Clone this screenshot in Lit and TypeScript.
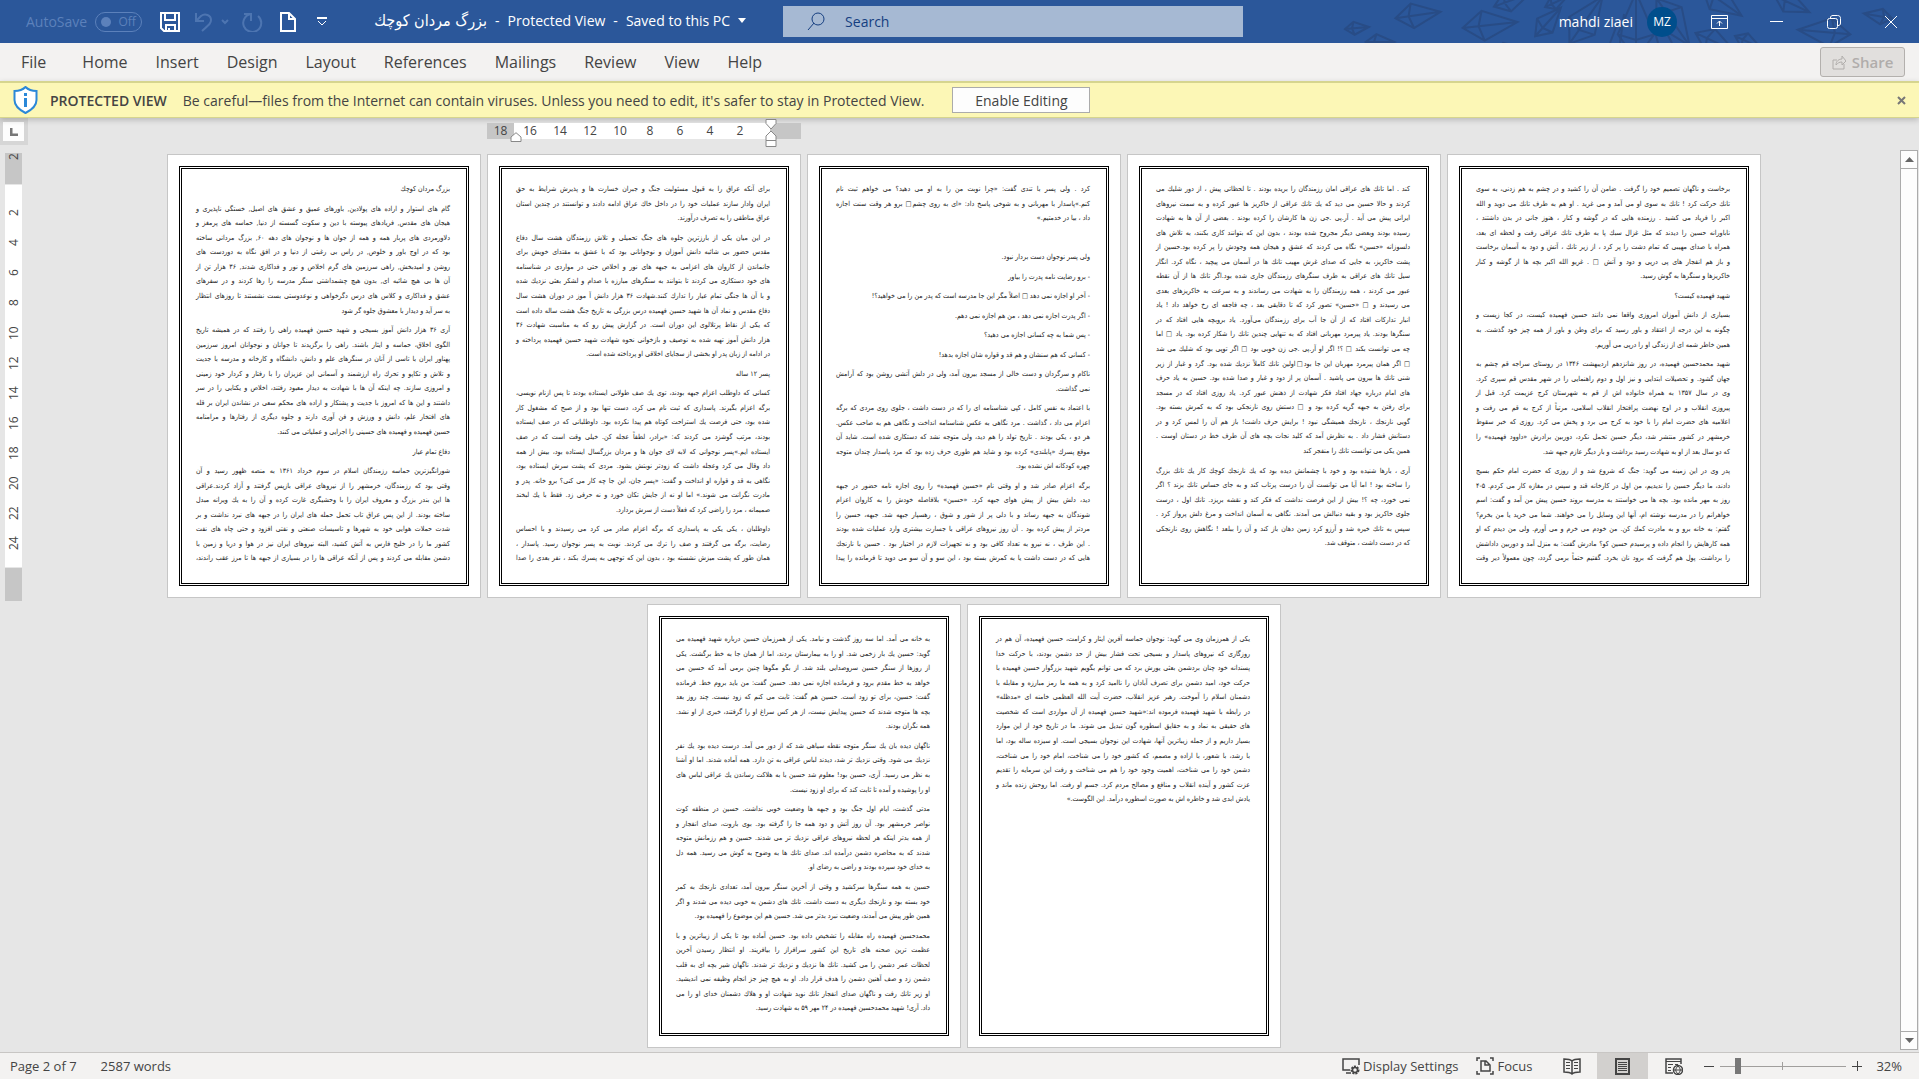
import { LitElement, html, css, svg, nothing } from "lit";
import { customElement, property } from "lit/decorators.js";
import { classMap } from "lit/directives/class-map.js";
import { styleMap } from "lit/directives/style-map.js";

interface PageData {
  paragraphs: string[];
  /** The last paragraph runs on to the next page. */
  continues?: boolean;
  /** Share of the page, in text rows, left empty at its foot. */
  blankRows?: number;
}

const PAGES: PageData[] = [
  {
    continues: true,
    paragraphs: [
      `بزرگ مردان کوچك`,
      `گام های استوار و اراده های پولادین, باورهای عمیق و عشق های اصیل, خستگی ناپذیری و
هیجان های مقدس, فریادهای پیوسته با دین و سکوت گسسته از دنیا, حماسه های پرمغز و
دلاورمردی های پربار همه و همه از جوان ها و نوجوان های دهه ۶۰, بزرگ مردانی ساخته
بود که در اوج باور و خلوص, در راس بی رغبتی از دنیا و در افق نگاه به دوردست های
روشن و امیدبخش, راهی سرزمین های گرم اخلاص و نور و فداکاری شدند, ۳۶ هزار تن از
آن ها بی هیچ شائبه ای, بدون هیچ چشمداشتی سنگر مدرسه را رها کردند و در سفرهای
عشق و فداکاری و کلاس های درس دگرخواهی و نوعدوستی بست نشستند تا روزهای انتظار
به سر آید و دیدار با معشوق جلوه گر شود`,
      `آری ۳۶ هزار دانش آموز بسیجی و شهید حسین فهمیده راهی را رفتند که در همیشه تاریخ
الگوی اخلاق، حماسه و ایثار باشند. راهی را برگزیدند تا جوانان و نوجوانان امروز سرزمین
پهناور ایران با تاسی از آنان در سنگرهای علم و دانش، دانشگاه و کارخانه و مدرسه با جدیت
و تلاش و تکاپو و تحرك راه ارزشمند و آسمانی این عزیزان را با رفتار و کردار خود زمینی
و امروزی سازند. چه اینکه آن ها با شهادت به دیدار معبود رفتند، اخلاص و یکتایی را در سر
داشتند و این ها که امروز با جدیت و پشتکار و اراده های محکم سعی در نشاندن ایران بر قله
های افتخار علم، دانش و ورزش و فن آوری دارند و جلوه دیگری از رفتارها و مرامنامه
حسین فهمیده و فهمیده های حسینی را اجرایی و عملیاتی می کنند.`,
      `دفاع تمام عیار`,
      `شورانگیزترین حماسه رزمندگان اسلام در سوم خرداد ۱۳۶۱ به منصه ظهور رسید و آن
وقتی بود که رزمندگان، خرمشهر را از نیروهای عراقی بازپس گرفتند و آزاد کردند.عراقی
ها این بندر بزرگ و معروف ایران را با وحشیگری غارت کرده و آن را به یك ویرانه مبدل
ساخته بودند. از این پس عراق تاب تحمل حمله های ایران را در جبهه های نبرد نداشت و بر
شدت حملات هوایی خود به شهرها و تاسیسات صنعتی و نفتی افزود و حتی چاه های نفت
کشور ما را در خلیج فارس به آتش کشید، البته نیروهای ایران نیز در هوا و دریا و زمین با
دشمن مقابله می کردند و پس از آنکه عراقی ها را در بسیاری از جبهه ها تا مرز عقب راندند،`,
    ],
  },
  {
    continues: true,
    paragraphs: [
      `برای آنکه عراق را به قبول مسئولیت جنگ و جبران خسارت ها و پذیرش شرایط به حق
ایران وادار سازند عملیات خود را در داخل خاك عراق ادامه دادند و توانستند در چندین استان
عراق مناطقی را به تصرف درآورند.`,
      `در این میان یکی از بارزترین جلوه های جنگ تحمیلی و تلاش رزمندگان هشت سال دفاع
مقدس حضور بی شائبه دانش آموزان و نوجوانانی بود که با عشق به مقتدای خویش برای
جانماندن از کاروان های اعزامی به جبهه های نور و اخلاص حتی در مواردی در شناسنامه
های خود دستکاری می کردند تا بتوانند به سنگرهای مبارزه با صدام و لشکر بعثی نزدیك شده
و با آن ها جنگی تمام عیار را تدارك کنند.شهادت ۳۶ هزار دانش آ موز در دوران هشت سال
دفاع مقدس و نماد آن ها شهید حسین فهمیده درس بزرگی به تاریخ جنگ هشت ساله داده است
که یکی از نقاط پرتلالوی این دوران است. در گزارش پیش رو که به مناسبت شهادت ۳۶
هزار دانش آموز تهیه شده به توصیف و بازخوانی نحوه شهادت شهید حسین فهمیده پرداخته و
در ادامه از زبان پدر او بخشی از سجایای اخلاقی او پرداخته شده است.`,
      `پسر ۱۲ ساله`,
      `کسانی که داوطلب اعزام جبهه بودند، توی یك صف طولانی ایستاده بودند تا پس ازنام نویسی،
برگه اعزام بگیرند. پاسداری که ثبت نام می کرد، دست تنها بود و از صبح که مشغول کار
شده بود، حتی فرصت یك استراحت کوتاه هم پیدا نکرده بود. داوطلبانی که در صف ایستاده
بودند، مرتب گوشزد می کردند که: «برادر، لطفاً عجله کن. خیلی وقت است که در صف
ایستاده ایم.»پسر نوجوانی که لابه لای جوان ها و مردان بزرگسال ایستاده بود، بیش از همه
داد وقال می کرد وعجله داشت که زودتر نوبتش بشود. مردی که پشت سرش ایستاده بود،
نگاهی به قد و قواره او انداخت و گفت: «پسر جان، این جا چه کار می کنی؟ برو خانه. پدر و
مادرت نگرانت می شوند.» اما او نه از جایش تکان خورد و نه حرفی زد. فقط با یك لبخند
صمیمانه ، مرد را راضی کرد که فعلاً دست از سرش بردارد.`,
      `داوطلبان ، یکی یکی به پاسداری که برگه اعزام صادر می کرد می رسیدند و با احساس
رضایت، برگه می گرفتند و صف را ترك می کردند. نوبت به پسر نوجوان رسید. پاسدار ،
همان طور که پشت میزش نشسته بود ، بدون این که توجهی به پسرك بکند ، نفر بعدی را صدا`,
    ],
  },
  {
    continues: true,
    paragraphs: [
      `کرد . ولی پسر با تندی گفت: «چرا نوبت من را به او می دهید؟ می خواهم ثبت نام
کنم.»پاسدار با مهربانی و به شوخی پاسخ داد: «ای به روی چشم□ برو هر وقت سنت اجازه
داد ، بیا در خدمتیم.»`,
      ``,
      `ولی پسر نوجوان دست بردار نبود.`,
      `- برو رضایت نامه پدرت را بیاور`,
      `- آخر او اجازه نمی دهد □ اصلاً مگر این جا مدرسه است که پدر من را می خواهید؟!`,
      `- اگر پدرت اجازه نمی دهد ، من هم اجازه نمی دهم.`,
      `- پس شما به چه کسانی اجازه می دهید؟`,
      `- کسانی که هم سنشان و هم قد و قواره شان اجازه بدهد!`,
      `ناکام و سرگردان و دست خالی از مسجد بیرون آمد، ولی در دلش آتشی روشن بود که آرامش
نمی گذاشت.`,
      `با اعتماد به نفس کامل ، کپی شناسنامه ای را که در دست داشت ، جلوی روی مردی که برگه
اعزام می داد ، گذاشت . مرد نگاهی به عکس شناسنامه انداخت و نگاهی هم به صاحب عکس.
هر دو ، یکی بودند . تاریخ تولد را هم دید، ولی متوجه نشد که دستکاری شده است. شاید آن
موقع پسرك «پابلندی» کرده بود و شاید هم طوری حرف زده بود که مرد پاسدار چندان متوجه
چهره کودکانه اش نشده بود.`,
      `برگه اعزام صادر شد و او وقتی نام «حسین فهمیده» را روی اجازه نامه حضور در جبهه
دید، دلش بیش از پیش هوای جبهه کرد. «حسین» بلافاصله خودش را به کاروان اعزام
شوندگان به جبهه رساند و با دلی پر از شور و شوق ، رهسپار جبهه شد. جبهه، حسین را
مردتر از پیش کرده بود . آن روز نیروهای عراقی با جسارت بیشتری وارد عملیات شده بودند
. این طرف ، نه نیرو به تعداد کافی بود و نه تجهیزات لازم در اختیار بود . حسین با نارنجك
هایی که در دست داشت یا به کمرش بسته بود ، این سو و آن سو می دوید تا فرمانده را پیدا`,
    ],
  },
  {
    blankRows: 0.7,
    paragraphs: [
      `کند . اما تانك های عراقی امان رزمندگان را بریده بودند . تا لحظاتی پیش ، از دور شلیك می
کردند و حالا حسین می دید که یك تانك عراقی از خاکریز ها عبور کرده و به سمت نیروهای
ایرانی پیش می آید . آر.پی .جی زن ها کارشان را کرده بودند . بعضی از آن ها به شهادت
رسیده بودند وبعضی دیگر مجروح شده بودند ، بدون این که بتوانند کاری بکنند، به تلاش های
دلسوزانه «حسین» نگاه می کردند که عشق و هیجان همه وجودش را پر کرده بود.حسین از
پشت خاکریز، به جایی که صدای غرش مهیب تانك ها در آسمان می پیچید ، نگاه کرد. انگار
سیل تانك های عراقی به طرف سنگرهای رزمندگان جاری شده بود.اگر تانك ها از آن نقطه
عبور می کردند ، همه رزمندگان را به شهادت می رساندند و به سرعت به خاکریزهای بعدی
می رسیدند و □ «حسین» تصور کرد که تا دقایقی بعد ، چه فاجعه ای رخ خواهد داد ! یاد
انبار تدارکات افتاد که از آن جا آب برای رزمندگان می‌آورد. یاد بروبچه هایی افتاد که در
سنگرها بودند. یاد پیرمرد مهربانی افتاد که به تنهایی چندین تانك را شکار کرده بود. یاد □ اما
چه می توانست بکند □ ؟! اگر او آر.پی .جی زن خوبی بود □ اگر توپی بود که شلیك می شد
□ اگر همان پیرمرد مهربان این جا بود□اولین تانك کاملاً نزدیك شده بود. گرد و غبار از زیر
شنی تانك ها بیرون می پاشید . آسمان پر از دود و غبار و صدا شده بود. حسین به یاد حرف
های امام درباره جهاد افتاد فکر شهادت از ذهنش عبور کرد. یاد روزی افتاد که در مسجد
برای رفتن به جبهه گریه کرده بود و □ دستش روی نارنجکی بود که به کمرش بسته بود.
گویی نارنجك ، نارنجك همیشگی نبود ! برایش حرف داشت! باز هم آن را لمس کرد و در
دستانش فشار داد . به نظرش آمد که کلید نجات بچه های آن طرف خط در دستان اوست .
همین یکی می توانست تانك را منفجر کند`,
      `آری ، بارها شنیده بود و خود با چشمانش دیده بود که یك نارنجك کوچك کار یك تانك بزرگ
را ساخته بود ! اما آیا می توانست آن را درست پرتاب کند و به جای حساس تانك بزند ؟ اگر
نمی خورد، چه ؟! بیش از این فرصت نداشت که فکر کند و نقشه بریزد. تانك اول ، درست
جلوی خاکریز بود و بقیه دنبالش می آمدند. نگاهی به آسمان انداخت و مرغ دلش پرواز کرد .
سپس به تانك خیره شد و آرزو کرد زمین دهان باز کند و آن را ببلعد ! نگاهش روی نارنجکی
که در دست داشت ، متوقف شد.`,
    ],
  },
  {
    continues: true,
    paragraphs: [
      `برخاست و ناگهان تصمیم خود را گرفت . ضامن آن را کشید و در چشم به هم زدنی، به سوی
تانك حرکت کرد ! تانك به سوی او می آمد و می غرید . او هم به طرف تانك می دوید و الله
اکبر را فریاد می کشید . رزمنده هایی که در گوشه و کنار ، هنوز جانی در بدن داشتند ،
ناباورانه حسین را دیدند که مثل غزال سبك پا به طرف تانك عراقی رفت و لحظه ای بعد،
همراه با صدای مهیبی که تمام دشت را پر کرد ، از زیر تانك ، آتش و دود به آسمان برخاست
و باز هم انفجار های پی درپی و دود و آتش □ . غریو الله اکبر بچه ها از گوشه و کنار
خاکریزها و سنگرها به گوش رسید.`,
      `شهید فهمیده کیست؟`,
      `بسیاری از دانش آموزان امروزی واقعا نمی دانند حسین فهمیده کیست، در کجا زیست و
چگونه به این درجه از اعتقاد و باور رسید که برای وطن و باور از همه چیز خود گذشت. به
همین خاطر شمه ای از زندگی او را درپی می آوریم.`,
      `شهید محمدحسین فهمیده، در روز شانزدهم اردیبهشت ۱۳۴۶ در روستای سراجه قم چشم به
جهان گشود. و تحصیلات ابتدایی و نیز اول و دوم راهنمایی را در شهر مقدس قم سپری کرد.
وی در سال ۱۳۵۷ به همراه خانواده اش از قم به شهرستان کرج عزیمت کرد. قبل از
پیروزی انقلاب و در اوج نهضت پرافتخار انقلاب اسلامی، مرتباً از کرج به قم می رفت و
اعلامیه های حضرت امام را با خود به کرج می برد و پخش می کرد. روزی که خبر سقوط
خرمشهر در کشور منتشر شد، دیگر حسین تحمل نکرد، دوربین برادرش «داوود فهمیده» را
که دو سال بعد از او به شهادت رسید برداشت و بار دیگر عازم جبهه شد.`,
      `پدر وی در این زمینه می گوید: جنگ که شروع شد و از روزی که حضرت امام حکم بسیج
دادند، ما دیگر حسین را ندیدیم، من اول در کارخانه قند و سپس در مغازه کار می کردم. ۵-۴
روز به مهر مانده بود. بچه ها می خواستند به مدرسه بروند حسین پیش من آمد و گفت: اسم
خواهرانم را در مدرسه نوشته ام، آنها این وسایل را می خواهند. شما می خرید یا من بخرم؟
گفتم: به خانه برو و به مادرت کمك کن. من خودم می خرم و می آورم. ولی من دیدم که او
همه کارهایش را انجام داده و پرسیدم حسین کو؟ مادرش گفت: به منزل آمد و دوربین داداشش
را برداشت. پول هم گرفت که برود نان بخرد. گفتیم حتماً برمی گردد، چون معمولاً دیر وقت`,
    ],
  },
  {
    paragraphs: [
      `به خانه می آمد. اما سه روز گذشت و نیامد. یکی از همرزمان حسین درباره شهید فهمیده می
گوید: حسین یك بار زخمی شد. او را به بیمارستان بردند، اما از همان جا به خط برگشت. یکی
از روزها از سنگر حسین سروصدایی بلند شد. از بگو مگوها چنین برمی آمد که حسین می
خواهد به خط مقدم برود و فرمانده اجازه نمی دهد. حسین گفت: من باید بروم خط. فرمانده
گفت: حسین، برای تو زود است. حسین هم گفت: ثابت می کنم که زود نیست. چند روز بعد
بچه ها متوجه شدند که حسین پیدایش نیست، از هر کس سراغ او را گرفتند، خبری از او نشد.
همه نگران بودند.`,
      `ناگهان دیده بان یك سنگر متوجه نقطه سیاهی شد که از دور می آمد. درست دیده بود یك نفر
نزدیك می شود. وقتی نزدیك تر شد، دیدند لباس عراقی به تن دارد. همه آماده شدند. اما او آشنا
به نظر می رسید. آری، حسین بود! معلوم شد حسین با به هلاکت رساندن یك عراقی لباس های
او را پوشیده و آمده تا ثابت کند که برای او زود نیست.`,
      `مدتی گذشت، ایام اول جنگ بود و جبهه ها وضعیت خوبی نداشت. حسین در منطقه کوت
نواصر خرمشهر بود. آن روز آتش و دود همه جا را گرفته بود. بوی باروت، صدای انفجار و
از همه بدتر اینکه هر لحظه نیروهای عراقی نزدیك تر می شدند. حسین و هم رزمانش متوجه
شدند که به محاصره دشمن درآمده اند. صدای تانك ها به وضوح به گوش می رسید. همه دل
به خدای خود سپرده بودند و راضی به رضای او.`,
      `حسین به همه سنگرها سرکشید و وقتی از آخرین سنگر بیرون آمد، تعدادی نارنجك به کمر
خود بسته بود و نارنجك دیگری به دست داشت. تانك های دشمن به خوبی دیده می شدند و اگر
همین طور پیش می آمدند، وضعیت نبرد بدتر می شد. حسین هم این موضوع را فهمیده بود.`,
      `محمدحسین فهمیده راه مقابله را تشخیص داده بود. حسین آماده بود تا یکی از زیباترین و با
عظمت ترین صحنه های تاریخ این کشور سرافراز را بیافریند. او انتظار رسیدن آخرین
لحظات عمر دشمن را می کشید. تانك ها نزدیك و نزدیك تر شدند. ناگهان شیر بچه ای به قلب
دشمن زد و صف آهنین دشمن را هدف قرار داد. او به هیچ چیز جز انجام وظیفه نمی اندیشید.
او زیر تانك رفت و ناگهان صدای انفجار تانك نوید شهادت او و هلاك دشمنان خدای او را می
داد. آری! شهید محمدحسین فهمیده در ۲۴ مهر ۵۹ به شهادت رسید.`,
    ],
  },
  {
    blankRows: 14,
    paragraphs: [
      `یکی از همرزمان وی می گوید: نوجوان حماسه آفرین ایثار و کرامت، حسین فهمیده، آن هم در
روزگاری که نیروهای پاسدار و بسیجی تحت فشار بیش از حد دشمن بودند، با حرکت خدا
پسندانه خود چنان بردشمن بعثی یورش برد که می توانم بگویم شهید بزرگوار حسین فهمیده با
حرکت خود، امید دشمن برای تصرف آبادان را ناامید کرد و به همه ما رمز مبارزه و مقابله با
دشمنان اسلام را آموخت. رهبر عزیز انقلاب، حضرت آیت الله العظمی خامنه ای «مدظله»
در رابطه با شهید فهمیده فرموده اند:«شهید حسین فهمیده از آن مواردی است که شخصیت
های حقیقی به نماد و به حقایق اسطوره گون تبدیل می شوند. ما در تاریخ خود از این موارد
بسیار داریم و از جمله زیباترین آنها، شهادت این نوجوان بسیجی است. او سیزده ساله بود، اما
با رشد، با شعور، با اراده و مصمم، که کشور خود را می شناخت، امام خود را می شناخت،
دشمن خود را می شناخت، اهمیت وجود خود را هم می شناخت و رفت این سرمایه را تقدیم
عزت کشور و آینده انقلاب و منافع و مصالح مردم کرد. جسم او رفت. اما روحش زنده ماند و
یادش ابدی شد و خاطره اش به صورت اسطوره درآمد. این الگوست.»`,
    ],
  },
];

const TABS = ["File", "Home", "Insert", "Design", "Layout", "References", "Mailings", "Review", "View", "Help"];
const H_MARKS = [16, 14, 12, 10, 8, 6, 4, 2];
const V_MARKS = [24, 22, 20, 18, 16, 14, 12, 10, 8, 6, 4, 2];

const icon = (w: number, h: number, body: unknown) => html`<svg
  width=${w} height=${h} viewBox="0 0 ${w} ${h}" fill="none" stroke="currentColor" aria-hidden="true"
>${body}</svg>`;

const base = css`
  *, *::before, *::after { box-sizing: border-box; }
  button, input { font: inherit; color: inherit; }
  button {
    display: inline-flex; align-items: center; justify-content: center;
    margin: 0; padding: 0; border: 0; background: none; white-space: nowrap;
  }
  svg { display: block; flex: none; }
`;

@customElement("doc-page")
class DocPage extends LitElement {
  @property({ attribute: false }) page!: PageData;

  static styles = [base, css`
    :host {
      display: block; width: 314px; height: 444px; padding: 11px;
      background: #fff; border: 1px solid #c6c6c6;
    }
    .frame {
      display: flex; flex-direction: column; gap: 5px; height: 100%;
      padding: 13px 16px 17px 14px; border: 3px double #000;
      direction: rtl; text-align: right; color: #1a1a1a;
      font: 7px/14px "DejaVu Sans Condensed", "DejaVu Sans", sans-serif;
    }
    .para { display: flex; flex-direction: column; flex-basis: 0; min-height: 0; margin: 0; }
    .line { flex: 1 1 0; min-height: 0; white-space: nowrap; }
    .full { text-align: justify; text-align-last: justify; }
  `];

  render() {
    const { paragraphs, continues, blankRows } = this.page;
    return html`<div class="frame" lang="fa">
      ${paragraphs.map((text, i) => {
        const lines = text.split("\n");
        const runsOn = continues && i === paragraphs.length - 1;
        return html`<p class="para" style=${styleMap({ flexGrow: String(lines.length) })}>
          ${lines.map((l, n) => html`<span class=${classMap({ line: true, full: n < lines.length - 1 || !!runsOn })}>${l}</span>`)}
        </p>`;
      })}
      ${blankRows ? html`<div class="para" style=${styleMap({ flexGrow: String(blankRows) })}></div>` : nothing}
    </div>`;
  }
}

@customElement("title-bar")
class TitleBar extends LitElement {
  static styles = [base, css`
    :host { display: block; position: relative; background: #2b579a; color: #fff; font-size: 14px; }
    .art { position: absolute; right: 0; top: 0; stroke: #284c86; }
    .bar { position: relative; display: flex; align-items: center; height: 43px; padding-left: 26px; }
    .side { display: flex; align-items: center; white-space: nowrap; }
    .dim { color: #5c81bb; }
    .auto { display: flex; align-items: center; gap: 8px; }
    .toggle { gap: 7px; width: 47px; height: 20px; border: 1px solid #5c81bb; border-radius: 10px; font-size: 12px; }
    .dot { width: 10px; height: 10px; border-radius: 5px; background: #5c81bb; }
    .quick { display: flex; align-items: center; margin-left: 18px; }
    .undo { margin-left: 14px; }
    .drop { margin-left: 8px; }
    .redo { margin-left: 13px; }
    .new { margin-left: 17px; }
    .more { margin-left: 21px; }
    .doc { margin-left: 47px; gap: 8px; padding-bottom: 2px; }
    .doc bdi { font-family: "DejaVu Sans Condensed", "DejaVu Sans", sans-serif; font-size: 16px; }
    .search {
      display: flex; align-items: center; gap: 20px; flex: 0 1 460px; height: 31px;
      margin: 0 24px 0 37px; padding-left: 24px; background: #a6b9d3; color: #153e80;
    }
    .search input { flex: 1; min-width: 0; padding: 0; border: 0; background: none; outline: 0; }
    .search input::placeholder { color: #153e80; opacity: 1; }
    .end { justify-content: flex-end; margin-left: auto; padding-right: 21px; }
    .avatar {
      width: 30px; height: 30px; margin: 0 34px 0 14px; border-radius: 15px;
      background: #004e8c; font-size: 12px;
    }
    .min { margin-left: 42px; }
    .restore { margin-left: 44px; }
    .close { margin-left: 43px; }
  `];

  private kite(x: number, y: number, s: number, r: number) {
    return svg`<g transform="translate(${x} ${y}) rotate(${r}) scale(${s})">
      <path d="M-24 0 L-6 -13 L24 0 L-6 13 Z M-24 0 L24 0 M-6 -13 L-10 0 L-6 13" vector-effect="non-scaling-stroke" />
    </g>`;
  }

  render() {
    return html`
      <svg class="art" width="579" height="43" viewBox="0 0 579 43" fill="none" stroke-width="2" aria-hidden="true">
        ${this.kite(17, 28, 0.5, -5)} ${this.kite(78, 15, 0.95, -8)} ${this.kite(40, 42, 0.6, 0)}
        ${this.kite(150, 25, 1.15, -6)} ${this.kite(172, 0, 0.8, -20)} ${this.kite(168, 50, 0.6, -10)}
        ${this.kite(208, 22, 0.8, -48)} ${this.kite(216, 2, 0.5, -25)}
        ${this.kite(246, 20, 1.2, -55)} ${this.kite(296, 26, 1.4, -90)}
        ${this.kite(333, 22, 1.2, 55)} ${this.kite(382, 2, 1, 35)} ${this.kite(375, 42, 0.9, 25)}
        ${this.kite(408, 42, 0.6, 25)} ${this.kite(452, 4, 0.8, 25)} ${this.kite(484, 32, 1.1, 185)}
        ${this.kite(538, 16, 0.6, 190)}
        <path d="M270 43 L278 22 M280 43 L284 14 M310 14 L318 43 M322 24 L332 43" />
      </svg>
      <div class="bar">
        <div class="side">
          <div class="auto dim"><span>AutoSave</span>
            <button class="toggle" aria-label="AutoSave"><span class="dot"></span>Off</button></div>
          <div class="quick">
            <button aria-label="Save">${icon(20, 20, svg`<g stroke-width="2"><path d="M1 1h18v18H4l-3-3z M5 1v7h10V1 M6 19v-6h9v6 M9 19v-3" /></g>`)}</button>
            <button class="undo dim" aria-label="Undo">${icon(19, 20, svg`<g stroke-width="2" opacity=".7"><path d="M2 1v8h8 M2 9l5-5c4-3 10-1 10 4 0 3-1 4-9 11" /></g>`)}</button>
            <button class="drop dim" aria-label="Undo list">${icon(8, 6, svg`<path d="M1 1l3 3 3-3" stroke-width="2" opacity=".7" />`)}</button>
            <button class="redo dim" aria-label="Repeat">${icon(21, 20, svg`<g stroke-width="2" opacity=".7"><path d="M2 2h7v7 M9 2a9 9 0 1 0 7 2" /></g>`)}</button>
            <button class="new" aria-label="New document">${icon(16, 20, svg`<path d="M1 1h8l6 6v12H1z M9 1v6h6" stroke-width="2" />`)}</button>
            <button class="more" aria-label="Customize toolbar">${icon(10, 9, svg`<path d="M0 1h10" stroke-width="2" /><path d="M1 4l4 4 4-4" />`)}</button>
          </div>
          <button class="doc"><bdi lang="fa">بزرگ مردان کوچك</bdi><span>-</span><span>Protected View</span><span>-</span><span>Saved to this PC</span>
            ${icon(8, 5, svg`<path d="M0 0h8L4 5z" fill="currentColor" stroke="none" />`)}</button>
        </div>
        <label class="search">
          ${icon(18, 19, svg`<circle cx="11" cy="7" r="6" /><path d="M7 11l-6 7" />`)}
          <input type="text" placeholder="Search" aria-label="Search" />
        </label>
        <div class="side end">
          <span>mahdi ziaei</span>
          <button class="avatar" aria-label="Account: mahdi ziaei">MZ</button>
          <button aria-label="Ribbon display options">${icon(17, 14, svg`<path d="M.5 .5h16v13H.5z M.5 3.500h16 M8.500 11V6" /><path d="M6 8.500l2.500-2.500 2.500 2.500" />`)}</button>
          <button class="min" aria-label="Minimize">${icon(13, 13, svg`<path d="M0 6.500h13" />`)}</button>
          <button class="restore" aria-label="Restore">${icon(14, 14, svg`<rect x=".5" y="3.500" width="10" height="10" rx="2" /><path d="M3.500 3c0-2 1-2.500 2.500-2.500h4.500c2 0 3 1 3 3V8c0 2-1 2.500-2.500 2.500" />`)}</button>
          <button class="close" aria-label="Close">${icon(14, 14, svg`<path d="M1 1l12 12 M13 1L1 13" />`)}</button>
        </div>
      </div>`;
  }
}

@customElement("status-bar")
class StatusBar extends LitElement {
  static styles = [base, css`
    :host {
      display: flex; align-items: center; height: 27px; padding: 0 17px 0 10px;
      border-top: 1px solid #c8c6c4; background: #f3f2f1; color: #444; font-size: 13px;
    }
    .words { margin-left: 24px; }
    .grow { flex: 1; }
    .tool { gap: 3px; }
    .focus { margin-left: 18px; }
    .views { display: flex; align-self: stretch; margin-left: 14px; }
    .view { width: 51px; }
    .on { background: #d2d0ce; }
    .zoom { display: flex; align-items: center; gap: 6px; margin-left: 5px; }
    .track { position: relative; display: flex; width: 126px; height: 16px; }
    .tick { position: absolute; left: 62px; top: 4px; width: 1px; height: 8px; background: #a19f9d; }
    input { width: 100%; height: 16px; margin: 0; background: none; appearance: none; }
    input::-webkit-slider-runnable-track { height: 1px; background: #a19f9d; }
    input::-webkit-slider-thumb { appearance: none; width: 6px; height: 16px; margin-top: -8px; background: #777; }
    .pct { margin-left: 8px; }
  `];

  render() {
    return html`
      <button>Page 2 of 7</button>
      <button class="words">2587 words</button>
      <span class="grow"></span>
      <button class="tool">${icon(18, 18, svg`<path d="M8 13H1V2h16v6 M4 16h5" stroke-width="1.5" /><circle cx="13" cy="13" r="3.5" stroke-width="2" stroke-dasharray="2 1" /><circle cx="13" cy="13" r="2.5" stroke-width="1.5" />`)}Display Settings</button>
      <button class="tool focus">${icon(18, 18, svg`<g stroke-width="1.5"><path d="M4 1H1v3 M14 1h3v3 M1 14v3h3 M17 14v3h-3 M5 4h5l4 4v6H5z M9 4v4h4" /></g>`)}Focus</button>
      <div class="views">
        <button class="view" aria-label="Read Mode">${icon(18, 17, svg`<path d="M9 3C7 1 4 1 1 1v13c3 0 6 0 8 2 2-2 5-2 8-2V1c-3 0-6 0-8 2v13" stroke-width="1.5" /><path d="M3 4.500h4 M3 7.500h4 M3 10.500h4 M11 4.500h4 M11 7.500h4 M11 10.500h4" />`)}</button>
        <button class="view on" aria-label="Print Layout">${icon(15, 17, svg`<path d="M1 1h13v15H1z" stroke-width="2" /><path d="M3 4.500h9 M3 6.500h9 M3 8.500h9 M3 10.500h9 M3 12.500h9" />`)}</button>
        <button class="view" aria-label="Web Layout">${icon(18, 17, svg`<path d="M8 15H1V1h15v5" stroke-width="1.5" /><path d="M1 3.500h15 M3 6.500h5 M3 9.500h3 M3 12.500h3 M10 6.500h3" /><circle cx="13" cy="12" r="4.5" stroke-width="1.5" /><path d="M9 12h8 M13 8c-3 3-3 5 0 8 M13 8c3 3 3 5 0 8" />`)}</button>
      </div>
      <div class="zoom">
        <button aria-label="Zoom out">${icon(10, 10, svg`<path d="M0 5h10" shape-rendering="crispEdges" />`)}</button>
        <label class="track"><span class="tick"></span><input type="range" min="10" max="190" value="32" aria-label="Zoom" /></label>
        <button aria-label="Zoom in">${icon(10, 10, svg`<path d="M0 5h10 M5 0v10" shape-rendering="crispEdges" />`)}</button>
        <button class="pct">32%</button>
      </div>`;
  }
}

@customElement("app-root")
class AppRoot extends LitElement {
  static styles = [base, css`
    :host {
      display: flex; flex-direction: column; min-height: 100vh; background: #e6e6e6;
      font-family: "Open Sans", "Noto Sans", sans-serif; color: #444;
    }
    .tabs {
      display: flex; align-items: center; gap: 28px; height: 38px; padding: 0 14px 0 21px;
      background: #f3f2f1; font-size: 16px;
    }
    .tabs a { color: #444; text-decoration: none; }
    .tabs a:first-child { margin-right: 8px; }
    .share {
      gap: 6px; width: 85px; height: 30px; margin-left: auto; border: 1px solid #b3b0ad; border-radius: 3px;
      background: #e1dfdd; color: #b0adab; font-size: 15px; font-weight: 600;
    }
    .notice {
      display: flex; align-items: center; height: 37px; padding: 0 13px; position: relative;
      border-top: 2px solid #d6d58e; border-bottom: 1px solid #d6d58e; background: #fcf7b6;
      box-shadow: 0 2px 6px #0003; font-size: 14px; white-space: nowrap;
    }
    .notice strong { margin: 0 16px 0 12px; font-weight: 600; }
    .enable { width: 138px; height: 26px; margin-left: 28px; border: 1px solid #ababab; background: #fdfdfd; }
    .dismiss { margin-left: auto; }
    .work { flex: 1; display: flex; }
    .left { flex: none; width: 28px; }
    .corner {
      width: 28px; height: 27px; border: 4px solid #d6d6d6; border-left-width: 3px;
      background: #fdfdfd; color: #777;
    }
    .vruler { display: flex; flex-direction: column; width: 17px; margin: 8px 0 0 5px; font-size: 12px; color: #444; }
    .margin { flex: none; background: #c6c6c6; }
    .vtop, .vbody { display: flex; flex-direction: column; align-items: center; }
    .vtop { height: 31px; }
    .vbody { flex-direction: column-reverse; justify-content: flex-end; height: 382px; margin: 1px 0; padding-top: 13px; background: #fff; }
    .vmark { flex: none; height: 30px; width: 17px; display: flex; align-items: center; justify-content: center; writing-mode: vertical-rl; transform: rotate(180deg); }
    .vtop .vmark { height: 8px; }
    .vend { height: 33px; }
    .canvas { flex: 1; min-width: 0; padding: 5px 0 4px; }
    .strip { width: 1594px; max-width: 100%; margin: 0 auto; padding-left: 320px; }
    .hruler { position: relative; display: flex; width: 314px; height: 16px; font-size: 12px; line-height: 16px; text-align: center; }
    .hstart { width: 27px; }
    .hbody { display: flex; width: 256px; background: #fff; padding-left: 1px; }
    .hmark { width: 30px; }
    .hend { width: 31px; }
    .tab-l { position: absolute; left: 23px; top: 9px; }
    .tab-r { position: absolute; left: 278px; top: -4px; }
    .pages { display: flex; flex-wrap: wrap; justify-content: center; gap: 6px; margin-top: 15px; padding: 0 3px; }
    .scroll { flex: none; display: flex; flex-direction: column; width: 19px; padding: 32px 1px 2px 0; }
    .arrow { height: 19px; border: 1px solid #ababab; background: #fdfdfd; color: #666; }
    .thumb { flex: 1; border: 1px solid #ababab; border-width: 0 1px; background: #fdfdfd; }
  `];

  render() {
    return html`
      <title-bar></title-bar>
      <nav class="tabs">
        ${TABS.map((t) => html`<a href="#${t.toLowerCase()}">${t}</a>`)}
        <button class="share">${icon(14, 15, svg`<path d="M5 5H1v9h11V9 M4 10c0-4 3-6 6-6V1l4 5-4 4V7c-3 0-4 1-6 3z" />`)}Share</button>
      </nav>
      <div class="notice">
        ${icon(25, 28, svg`<path d="M12.500 1c3 3 7 4 11 4v9c0 6-5 10-11 13C6.500 24 1.500 20 1.500 14V5c4 0 8-1 11-4z" fill="#fff" stroke="#2b88d8" stroke-width="2" /><path d="M12.500 12v9 M12.500 7v3" stroke="#2b88d8" stroke-width="3" />`)}
        <strong>PROTECTED VIEW</strong>
        <span>Be careful—files from the Internet can contain viruses. Unless you need to edit, it's safer to stay in Protected View.</span>
        <button class="enable">Enable Editing</button>
        <button class="dismiss" aria-label="Close message">${icon(9, 9, svg`<path d="M1 1l7 7 M8 1L1 8" stroke="#777" stroke-width="2" />`)}</button>
      </div>
      <main class="work">
        <div class="left">
          <button class="corner" aria-label="Tab stop">${icon(8, 8, svg`<path d="M1 0v7h7" stroke-width="3" />`)}</button>
          <div class="vruler">
            <div class="margin vtop"><span class="vmark">2</span></div>
            <div class="vbody">${V_MARKS.map((n) => html`<span class="vmark">${n}</span>`)}</div>
            <div class="margin vend"></div>
          </div>
        </div>
        <div class="canvas">
          <div class="strip">
            <div class="hruler">
              <div class="margin hstart">18</div>
              <div class="hbody">${H_MARKS.map((n) => html`<span class="hmark">${n}</span>`)}</div>
              <div class="margin hend"></div>
              <svg class="tab-l" width="12" height="10" viewBox="0 0 12 10" fill="#fff" stroke="#888"><path d="M1 9.500V5L6 0.700 11 5v4.500z" /></svg>
              <svg class="tab-r" width="12" height="29" viewBox="0 0 12 29" fill="#fff" stroke="#888"><path d="M1 .5h10v4L6 10 1 4.500z M1 21.500V17l5-5 5 5v4.500z M1 21.500h10v6H1z" /></svg>
            </div>
          </div>
          <div class="pages">${PAGES.map((p) => html`<doc-page .page=${p}></doc-page>`)}</div>
        </div>
        <div class="scroll">
          <button class="arrow" aria-label="Scroll up">${icon(9, 5, svg`<path d="M0 5h9L4.500 0z" fill="currentColor" stroke="none" />`)}</button>
          <div class="thumb"></div>
          <button class="arrow" aria-label="Scroll down">${icon(9, 5, svg`<path d="M0 0h9L4.500 5z" fill="currentColor" stroke="none" />`)}</button>
        </div>
      </main>
      <status-bar></status-bar>`;
  }
}
